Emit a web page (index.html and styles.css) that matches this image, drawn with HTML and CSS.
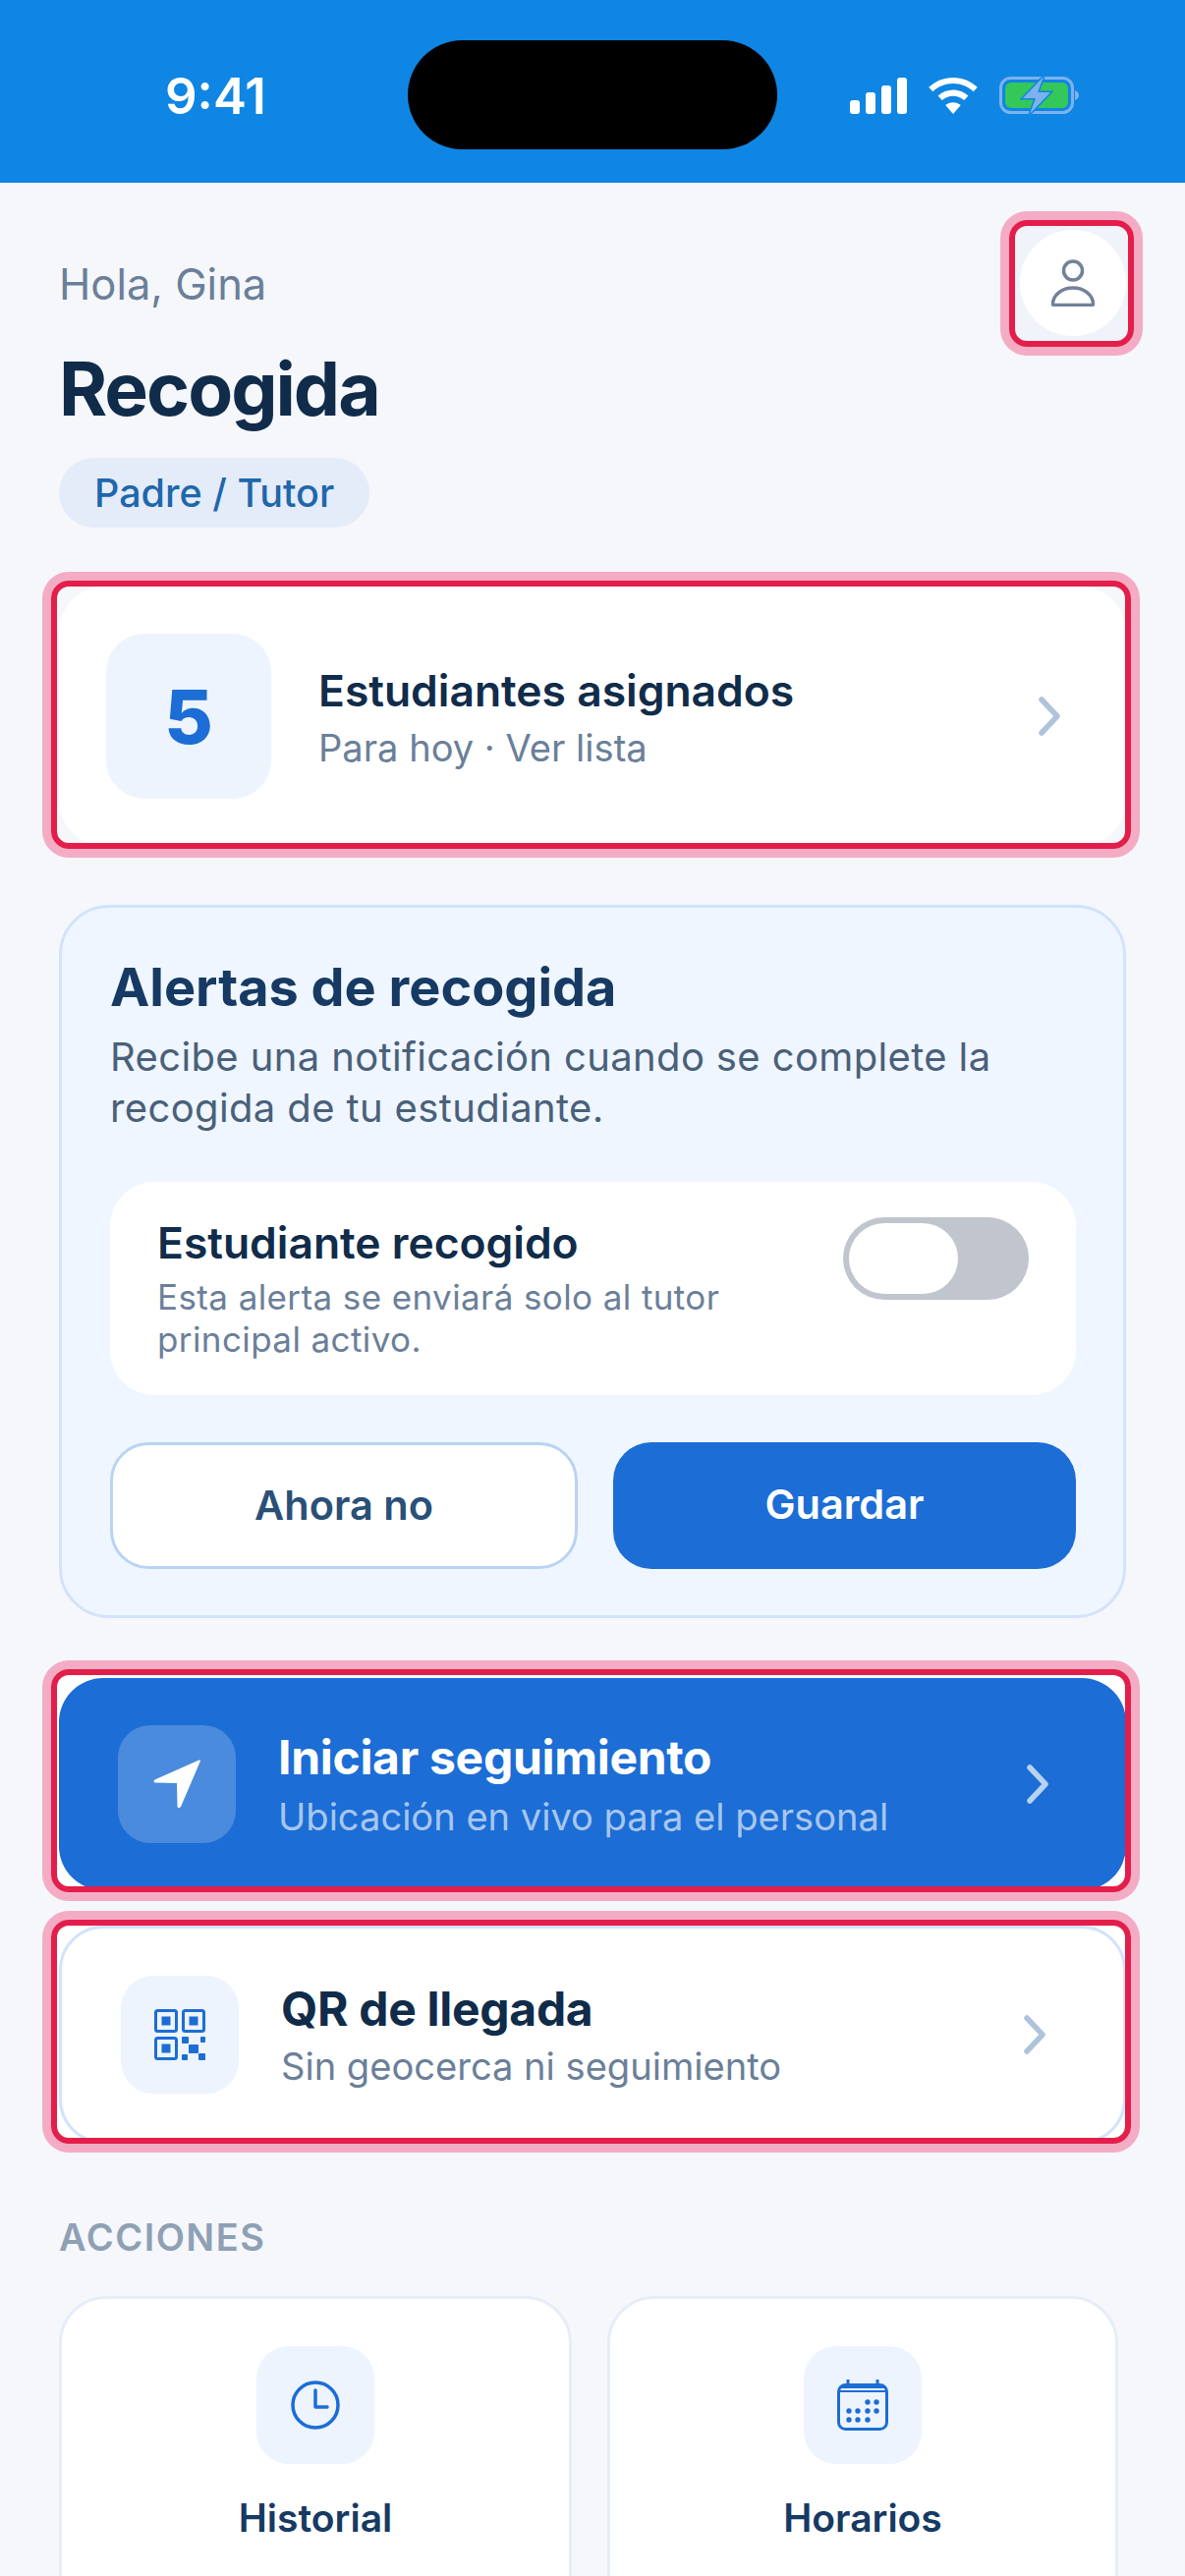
FILE: index.html
```html
<!DOCTYPE html>
<html lang="es">
<head>
<meta charset="utf-8">
<title>Recogida</title>
<link rel="stylesheet" href="styles.css">
</head>
<body>
<div class="screen">
  <header class="status">
    <span class="time">9:41</span>
    <div class="island"></div>
    <div class="status-icons">
      <svg class="sig" width="58" height="37" viewBox="0 0 58 37"><rect x="0" y="23" width="10" height="14" rx="3"/><rect x="16" y="15" width="10" height="22" rx="3"/><rect x="32" y="8" width="10" height="29" rx="3"/><rect x="48" y="0" width="10" height="37" rx="3"/></svg>
      <svg class="wifi" width="50" height="37" viewBox="0 0 50 37"><path d="M25 0C34.500 0 43.200 3.700 49.800 9.800L45.600 14.200C40.200 9.200 33 6.100 25 6.100S9.800 9.200 4.400 14.200L.2 9.800C6.800 3.700 15.500 0 25 0Z"/><path d="M25 12.600C30.900 12.600 36.300 14.900 40.400 18.600L36.200 23C33.200 20.400 29.300 18.800 25 18.800S16.800 20.400 13.800 23L9.600 18.600C13.700 14.900 19.100 12.600 25 12.600Z"/><path d="M25 25.200C28 25.200 30.700 26.300 32.800 28.100L25 37 17.200 28.100C19.300 26.300 22 25.200 25 25.200Z"/></svg>
      <svg class="batt" width="82" height="38" viewBox="0 0 82 38"><rect x="1.500" y="1.500" width="73" height="35" rx="10" fill="none" stroke="#7DB2EC" stroke-width="3"/><rect x="6" y="6" width="64" height="26" rx="6" fill="#34C759"/><path d="M77 14c3 1 4 3 4 5s-1 4-4 5z" fill="#7DB2EC"/><path d="M45 0 24 22H37L31 38 52 16H39Z" fill="#7DB2EC" stroke="#0F86E3" stroke-width="3" paint-order="stroke"/></svg>
    </div>
  </header>

  <main class="content">
    <section class="head">
      <div class="head-text">
        <p class="hello">Hola, Gina</p>
        <h1 class="title">Recogida</h1>
        <span class="badge">Padre / Tutor</span>
      </div>
      <div class="profile-mark">
        <button class="profile">
          <svg width="48" height="48" viewBox="0 0 48 48" fill="none" stroke="#718299" stroke-width="3.500" stroke-linejoin="round"><circle cx="24" cy="11.500" r="9.500"/><path d="M3.500 45.500C3.500 36.500 12.500 29 24 29S44.500 36.500 44.500 45.500C44.500 46.100 44 46.500 43.500 46.500H4.500C4 46.500 3.500 46.100 3.500 45.500Z"/></svg>
        </button>
      </div>
    </section>

    <a class="row row-assigned mark mark-assigned">
      <div class="count">5</div>
      <div class="row-text">
        <div class="row-title row-title-semi">Estudiantes asignados</div>
        <div class="row-sub">Para hoy · Ver lista</div>
      </div>
      <svg class="chev" width="22" height="40" viewBox="0 0 22 40"><path d="M3 3 19 20 3 37"/></svg>
    </a>

    <section class="alerts">
      <h2 class="alerts-title">Alertas de recogida</h2>
      <p class="alerts-desc">Recibe una notificación cuando se complete la recogida de tu estudiante.</p>
      <div class="alert-option">
        <div>
          <div class="option-title">Estudiante recogido</div>
          <div class="option-sub">Esta alerta se enviará solo al tutor principal activo.</div>
        </div>
        <div class="toggle"><span class="knob"></span></div>
      </div>
      <div class="alert-actions">
        <button class="btn btn-ghost">Ahora no</button>
        <button class="btn btn-primary">Guardar</button>
      </div>
    </section>

    <div class="mark mark-fill mark-track">
      <a class="row row-track">
        <div class="tile tile-glass">
          <svg width="48" height="50" viewBox="0 0 48 50"><path d="M46.500 .5 1.500 20.500C0 21.300 .4 23.500 2 23.500L24 24 24.500 47.500C24.500 49.300 27 49.700 28 48L47.700 2C48 .8 47.500 .2 46.500 .5Z" fill="#fff"/></svg>
        </div>
        <div class="row-text">
          <div class="row-title row-title-big row-title-white">Iniciar seguimiento</div>
          <div class="row-sub row-sub-white row-sub-far">Ubicación en vivo para el personal</div>
        </div>
        <svg class="chev chev-white" width="22" height="40" viewBox="0 0 22 40"><path d="M3 3 19 20 3 37"/></svg>
      </a>
    </div>

    <div class="mark mark-fill mark-qr">
      <a class="row row-qr">
        <div class="tile">
          <svg width="52" height="52" viewBox="0 0 52 52" fill="#1C6DD5">
            <g fill="none" stroke="#1C6DD5" stroke-width="3"><rect x="1.500" y="1.500" width="21" height="21" rx="2"/><rect x="29.500" y="1.500" width="21" height="21" rx="2"/><rect x="1.500" y="29.500" width="21" height="21" rx="2"/></g>
            <rect x="7.500" y="7.500" width="9" height="9"/><rect x="35.500" y="7.500" width="9" height="9"/><rect x="7.500" y="35.500" width="9" height="9"/>
            <rect x="28" y="28" width="7" height="7" rx="1"/><rect x="47" y="28" width="5" height="6" rx="1"/><rect x="35" y="36" width="10" height="9" rx="1"/><rect x="28" y="46" width="6" height="6" rx="1"/><rect x="45" y="45" width="7" height="7" rx="1"/>
          </svg>
        </div>
        <div class="row-text">
          <div class="row-title row-title-big">QR de llegada</div>
          <div class="row-sub">Sin geocerca ni seguimiento</div>
        </div>
        <svg class="chev" width="22" height="40" viewBox="0 0 22 40"><path d="M3 3 19 20 3 37"/></svg>
      </a>
    </div>

    <div class="section-label">ACCIONES</div>
    <div class="actions">
      <div class="action">
        <div class="tile">
          <svg width="50" height="50" viewBox="0 0 50 50" fill="none" stroke="#1C6DD5" stroke-width="3.500" stroke-linecap="round" stroke-linejoin="round"><circle cx="25" cy="25" r="23"/><path d="M25 10V27H37"/></svg>
        </div>
        <div class="action-label">Historial</div>
      </div>
      <div class="action">
        <div class="tile">
          <svg width="52" height="52" viewBox="0 0 52 52" fill="none" stroke="#1C6DD5" stroke-width="3"><rect x="1.500" y="5.500" width="49" height="45" rx="7"/><path d="M2 12H50" stroke-width="2"/><path d="M11 1V5M41 1V5" stroke-linecap="round"/><path d="M4 7.500H48" stroke-width="3"/><g fill="#1C6DD5" stroke="none"><circle cx="31" cy="23" r="2.700"/><circle cx="40" cy="23" r="2.700"/><circle cx="12" cy="32" r="2.700"/><circle cx="21" cy="32" r="2.700"/><circle cx="31" cy="32" r="2.700"/><circle cx="40" cy="32" r="2.700"/><circle cx="12" cy="41" r="2.700"/><circle cx="21" cy="41" r="2.700"/><circle cx="31" cy="41" r="2.700"/></g></svg>
        </div>
        <div class="action-label">Horarios</div>
      </div>
    </div>
  </main>
</div>
</body>
</html>
```

FILE: styles.css
```css
* { box-sizing: border-box; }
html, body { margin: 0; padding: 0; }
body { width: 1206px; height: 2622px; overflow: hidden; background: #F5F7FB; font-family: Inter, "Noto Sans", sans-serif; }
.screen { width: 1206px; height: 2622px; overflow: hidden; }
p, h1, h2 { margin: 0; }

.status { height: 186px; background: #0F86E3; display: flex; align-items: flex-start; position: relative; }
.time { position: absolute; left: 168px; top: 69px; font-weight: 600; font-size: 51px; line-height: 58px; color: #fff; }
.island { position: absolute; left: 415px; top: 41px; width: 376px; height: 111px; border-radius: 56px; background: #000; }
.status-icons { margin-left: 865px; margin-top: 78px; display: flex; align-items: flex-start; gap: 22px; }
.sig, .wifi { fill: #fff; margin-top: 1px; }
.batt { display: block; }

.content { padding: 0 60px; }
.head { display: flex; justify-content: space-between; align-items: flex-start; height: 396px; position: relative; }
.hello { font-size: 43.500px; line-height: 54px; color: #6B7F99; padding-top: 76px; }
.title { font-size: 75px; line-height: 90px; font-weight: 700; color: #102C4A; margin-top: 35px; letter-spacing: -2px; }
.badge { display: flex; width: fit-content; align-items: center; height: 71px; margin-top: 25px; padding: 0 36px; border-radius: 36px; background: #E4ECF9; color: #1F67AB; font-size: 39.500px; font-weight: 500; }
.profile-mark { position: absolute; left: 978px; top: 48px; width: 108px; height: 108px; }
.profile-mark::after { content: ""; position: absolute; left: -11px; top: -10px; right: -8px; bottom: -11px; border: 6px solid #E31E4A; border-radius: 18px; box-shadow: 0 0 0 9px #F4ACC4; pointer-events: none; z-index: 2; }
.profile-mark::before { content: ""; position: absolute; left: -6px; top: -5px; right: -3px; bottom: -6px; background: #F0F3F9; border-radius: 12px; }
.profile { position: relative; z-index: 1; width: 108px; height: 108px; border-radius: 50%; border: 0; padding: 0; background: #fff; display: flex; align-items: center; justify-content: center; }

.mark { position: relative; display: block; }
.mark::after { content: ""; position: absolute; left: -8px; right: -5px; top: -6px; bottom: -6px; border: 6px solid #E31E4A; border-radius: 18px; box-shadow: 0 0 0 9px #F4ACC4; pointer-events: none; }
.mark-assigned::after { top: -5px; bottom: -2px; }
.mark-track::after { top: -9px; bottom: -2px; }
.mark-qr::after { top: -6px; bottom: 0; }
.mark-fill::before { content: ""; position: absolute; left: -3px; right: 0; top: -4px; bottom: 0; background: #fff; border-radius: 14px; }

.row { position: relative; display: flex; align-items: center; }
.row-assigned { display: flex; height: 266px; margin-top: 14px; background: #fff; border-radius: 48px; padding: 0 67px 0 48px; margin-bottom: 59px; gap: 48px; }
.count { width: 168px; height: 168px; border-radius: 39px; background: #EDF4FE; color: #1C6DD5; font-size: 76px; font-weight: 800; display: flex; align-items: center; justify-content: center; flex: none; }
.row-text { flex: 1; min-width: 0; padding-top: 3px; }
.row-title { font-size: 44.400px; line-height: 58px; font-weight: 700; color: #102C4A; }
.row-title-semi { font-weight: 600; }
.row-title-big { font-size: 48px; letter-spacing: -.3px; }
.row-sub { font-size: 38.100px; line-height: 52px; color: #6B7F99; margin-top: 3px; }
.row-sub-far { margin-top: 5px; }
.chev { fill: none; stroke: #AFC3DC; stroke-width: 5.500px; stroke-linecap: round; stroke-linejoin: round; flex: none; }
.chev-white { stroke: #B9D2F0; }

.alerts { height: 726px; background: #EFF6FF; border: 3px solid #D2E3FB; border-radius: 51px; padding: 48px 48px 0 49px; margin-bottom: 61px; }
.alerts-title { font-size: 54px; line-height: 66px; font-weight: 700; color: #163A63; }
.alerts-desc { font-size: 40px; line-height: 52px; color: #4A6079; margin-top: 12px; letter-spacing: .37px; }
.alert-option { background: #fff; border-radius: 45px; height: 217px; margin-top: 49px; padding: 34px 48px 0; display: flex; justify-content: space-between; align-items: flex-start; gap: 40px; }
.option-title { font-size: 44.400px; line-height: 56px; font-weight: 600; color: #102C4A; }
.option-sub { font-size: 35px; line-height: 43px; color: #6B7F99; margin-top: 6px; letter-spacing: .4px; }
.toggle { flex: none; width: 189px; height: 84px; border-radius: 42px; background: #C1C5CE; padding: 6px; margin-top: 2px; }
.knob { display: block; width: 111px; height: 72px; border-radius: 36px; background: #fff; }
.alert-actions { display: flex; gap: 36px; margin-top: 48px; }
.btn { height: 129px; border-radius: 39px; font-family: inherit; font-size: 41.500px; font-weight: 600; padding: 0; }
.btn-ghost { flex: 0 0 476px; background: #fff; border: 3px solid #B9D3F3; color: #2A5078; padding-bottom: 2px; }
.btn-primary { flex: 1; background: #1C6DD5; border: 0; color: #fff; padding-bottom: 4px; }

.row-track { height: 216px; background: #1C6DD5; border-radius: 45px; padding: 0 79px 0 60px; gap: 43px; }
.mark-fill + .mark-fill { margin-top: 36px; }
.row-qr { height: 222px; background: #fff; border: 3px solid #D2E3FB; border-radius: 45px; padding: 0 79px 0 60px; gap: 43px; }
.tile { width: 120px; height: 120px; border-radius: 33px; background: #EDF4FE; display: flex; align-items: center; justify-content: center; flex: none; }
.tile-glass { background: #4A8BDD; }
.row-title-white { color: #fff; }
.row-sub-white { color: #A7C6EE; }

.section-label { margin-top: 72px; font-size: 38px; line-height: 46px; font-weight: 600; color: #8FA0B5; letter-spacing: 1.500px; }
.actions { display: grid; grid-template-columns: 522px 520px; gap: 36px; margin-top: 37px; }
.action { height: 400px; background: #fff; border: 3px solid #E6EDF8; border-radius: 48px; padding-top: 48px; display: flex; flex-direction: column; align-items: center; }
.action-label { font-size: 39px; line-height: 50px; font-weight: 600; color: #163A63; margin-top: 30px; }
```
